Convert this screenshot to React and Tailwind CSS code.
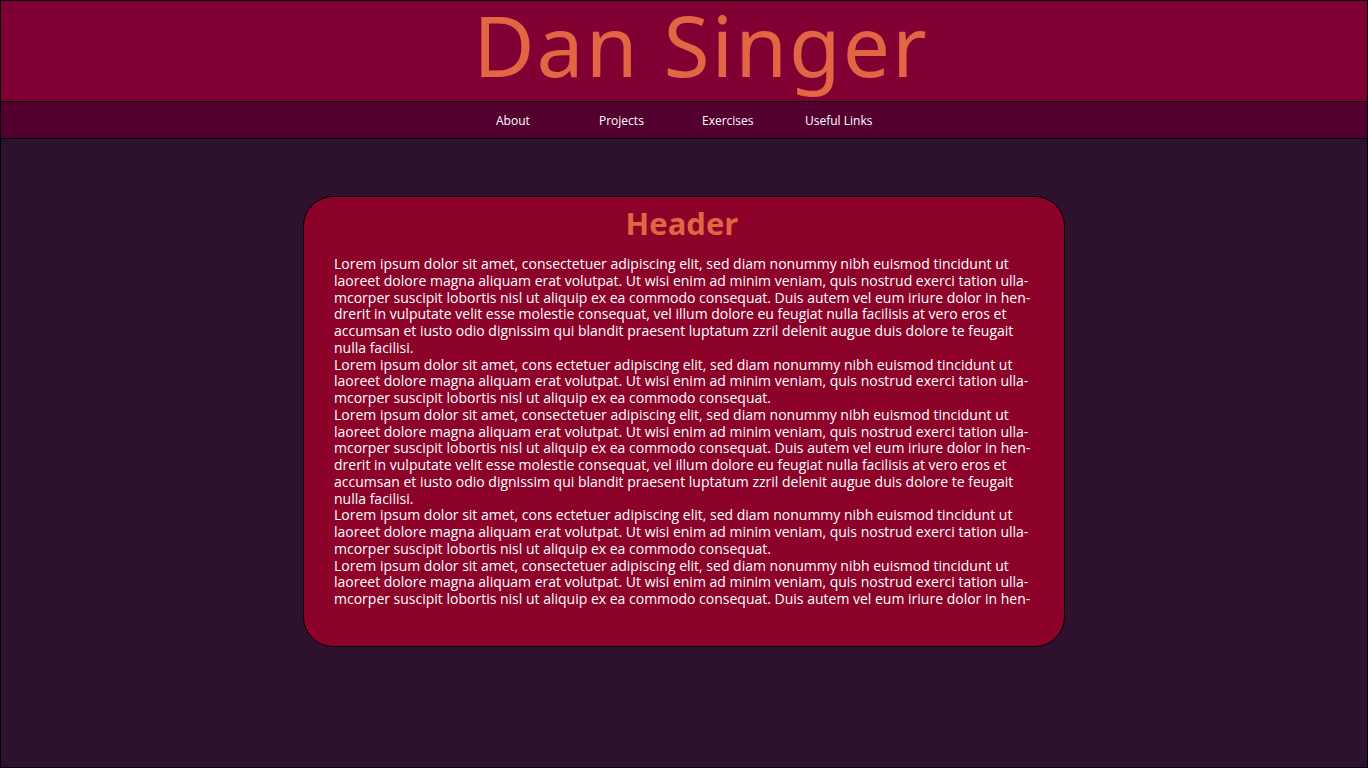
import React from "react";

const P1 =
    "Lorem ipsum dolor sit amet, consectetuer adipiscing elit, sed diam nonummy nibh euismod tincidunt ut laoreet dolore magna aliquam erat volutpat. Ut wisi enim ad minim veniam, quis nostrud exerci tation ulla\u00ADmcorper suscipit lobortis nisl ut aliquip ex ea commodo consequat. Duis autem vel eum iriure dolor in hen\u00ADdrerit in vulputate velit esse molestie consequat, vel illum dolore eu feugiat nulla facilisis at vero eros et accumsan et iusto odio dignissim qui blandit praesent luptatum zzril delenit augue duis dolore te feugait nulla facilisi.";

const P2 =
    "Lorem ipsum dolor sit amet, cons ectetuer adipiscing elit, sed diam nonummy nibh euismod tincidunt ut laoreet dolore magna aliquam erat volutpat. Ut wisi enim ad minim veniam, quis nostrud exerci tation ulla\u00ADmcorper suscipit lobortis nisl ut aliquip ex ea commodo consequat.";

const links = ["About", "Projects", "Exercises", "Useful Links"];

export default function App() {
    return (
        <div
            className="h-[768px] w-[1368px] border border-black bg-[#2e112d] flex flex-col"
            style={{ fontFamily: "'Open Sans', sans-serif" }}
        >
            <header className="h-[100px] bg-[#810033] flex items-start justify-center pl-[34px] shrink-0">
                <h1
                    className="text-[84px] font-normal leading-none tracking-[2px] text-[#e36644] mt-[2px]"
                    style={{ fontFamily: "'Noto Sans', sans-serif" }}
                >
                    Dan Singer
                </h1>
            </header>

            <nav className="h-[38px] bg-[#530030] border-y border-black flex justify-center items-center pt-[2px] shrink-0">
                {links.map((l) => (
                    <a key={l} className="w-[103px] pl-[18px] text-[12px] text-white cursor-pointer">
                        {l}
                    </a>
                ))}
            </nav>

            <main className="flex justify-center pt-[57px]">
                <section className="w-[762px] h-[451px] bg-[#8c0229] border border-black rounded-[30px] px-[30px] pt-[6px]">
                    <h2 className="text-[31px] font-bold text-center text-[#e36644] leading-[40px] pr-[4px]">
                        Header
                    </h2>
                    <div
                        lang="en"
                        className="mt-[13px] h-[352px] overflow-hidden text-[14px] leading-[16.75px] text-white"
                    >
                        <p>{P1}</p>
                        <p>{P2}</p>
                        <p>{P1}</p>
                        <p>{P2}</p>
                        <p>{P1}</p>
                    </div>
                </section>
            </main>
        </div>
    );
}
